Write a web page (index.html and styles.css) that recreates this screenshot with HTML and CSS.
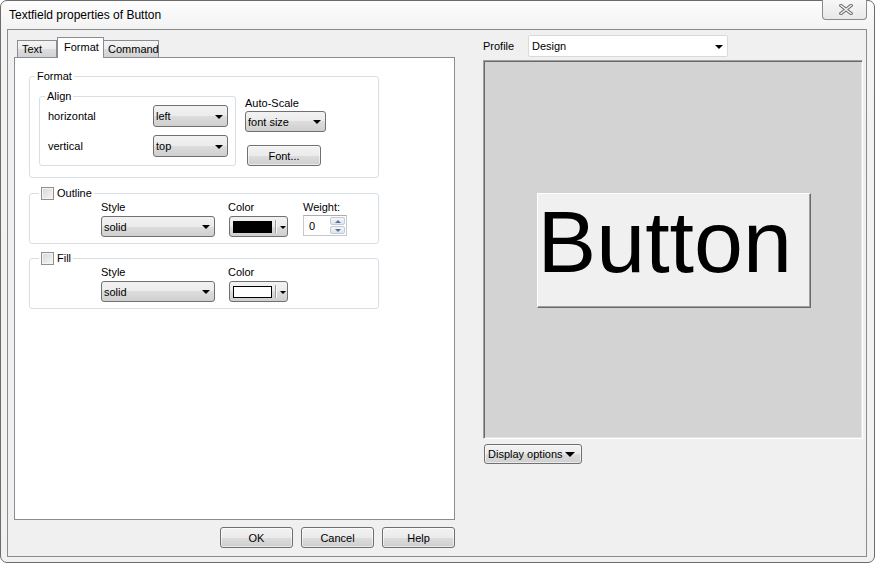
FILE: index.html
```html
<!DOCTYPE html>
<html>
<head>
<meta charset="utf-8">
<title>Textfield properties of Button</title>
<link rel="stylesheet" href="styles.css">
</head>
<body>
<div class="window">
  <div class="titlebar">
    <span class="title">Textfield properties of Button</span>
    <div class="close">
      <svg width="14" height="11" viewBox="0 0 14 11">
        <path d="M2 1.5 L12 9.5 M12 1.5 L2 9.5" stroke="#6a6a6a" stroke-width="3.4" stroke-linecap="square" fill="none"/>
        <path d="M2 1.5 L12 9.5 M12 1.5 L2 9.5" stroke="#f3f3f3" stroke-width="1.5" stroke-linecap="square" fill="none"/>
      </svg>
    </div>
  </div>
  <div class="client">
    <div class="left">
      <div class="tabs">
        <div class="tab tab-text">Text</div>
        <div class="tab tab-format">Format</div>
        <div class="tab tab-cmd">Command</div>
      </div>
      <div class="panel">
        <fieldset class="group wide">
          <legend class="lg">Format</legend>
          <div class="format-row">
            <fieldset class="group align">
              <legend class="lg">Align</legend>
              <div class="align-body">
                <div class="arow"><span>horizontal</span><div class="combo w75"><span>left</span><i class="arr"></i></div></div>
                <div class="arow"><span>vertical</span><div class="combo w75"><span>top</span><i class="arr"></i></div></div>
              </div>
            </fieldset>
            <div class="autoscale">
              <span class="lbl">Auto-Scale</span>
              <div class="combo w81 mt1"><span>font size</span><i class="arr"></i></div>
              <div class="btn font-btn">Font...</div>
            </div>
          </div>
        </fieldset>

        <fieldset class="group wide outline">
          <legend class="lg chk-legend"><span class="chk"></span><span>Outline</span></legend>
          <div class="cols">
            <div class="col col-style"><span class="lbl">Style</span><div class="combo w114 mt2"><span>solid</span><i class="arr"></i></div></div>
            <div class="col col-color"><span class="lbl">Color</span><div class="colorpick mt2"><span class="swatch black"></span><span class="sep"></span><i class="arr small"></i></div></div>
            <div class="col col-weight"><span class="lbl">Weight:</span>
              <div class="spin">
                <span class="val">0</span>
                <span class="spinbtns"><span class="sb up"><i></i></span><span class="sb dn"><i></i></span></span>
              </div>
            </div>
          </div>
        </fieldset>

        <fieldset class="group wide fill">
          <legend class="lg chk-legend"><span class="chk"></span><span>Fill</span></legend>
          <div class="cols">
            <div class="col col-style"><span class="lbl">Style</span><div class="combo w114 mt2"><span>solid</span><i class="arr"></i></div></div>
            <div class="col col-color"><span class="lbl">Color</span><div class="colorpick mt2"><span class="swatch white"></span><span class="sep"></span><i class="arr small"></i></div></div>
          </div>
        </fieldset>
      </div>
      <div class="buttons">
        <div class="btn dlg">OK</div>
        <div class="btn dlg">Cancel</div>
        <div class="btn dlg">Help</div>
      </div>
    </div>
    <div class="right">
      <div class="profile-row">
        <span class="profile-lbl">Profile</span>
        <div class="profile-combo"><span>Design</span><i class="arr"></i></div>
      </div>
      <div class="preview">
        <div class="pv-button">Button</div>
      </div>
      <div class="btn dispopt"><span>Display options</span><i class="arr big"></i></div>
    </div>
  </div>
</div>
</body>
</html>
```
FILE: styles.css
```css
* { box-sizing: border-box; }
html, body { margin: 0; padding: 0; }
body {
  width: 875px;
  height: 564px;
  overflow: hidden;
  background: #ffffff;
  font-family: "Liberation Sans", Arial, sans-serif;
  font-size: 11px;
  color: #000;
}
.window {
  width: 875px;
  height: 563px;
  border: 1px solid #6b6b6b;
  border-radius: 7px;
  background: linear-gradient(#fdfdfd, #f3f3f3 28px, #f1f1f1);
  padding: 0 7px 5px 6px;
  display: flex;
  flex-direction: column;
}
.titlebar {
  height: 28px;
  display: flex;
  justify-content: space-between;
  align-items: flex-start;
  padding-left: 2px;
}
.title {
  font-size: 12px;
  line-height: 28px;
  color: #000;
}
.close {
  margin-top: -1px;
  width: 45px;
  height: 20px;
  border: 1px solid #8a8a8a;
  border-top: none;
  border-radius: 0 0 4px 4px;
  background: linear-gradient(#f7f7f7, #e8e8e8);
  display: flex;
  align-items: center;
  justify-content: center;
  padding-left: 2px;
}
.client {
  flex: 1;
  border: 1px solid #8b8b8b;
  background: #f0f0f0;
  display: flex;
  gap: 28px;
  padding: 0 3px 0 6px;
}
/* left column */
.left {
  width: 441px;
  padding-top: 7px;
  display: flex;
  flex-direction: column;
}
.tabs {
  height: 20px;
  display: flex;
  align-items: flex-end;
  padding-left: 3px;
}
.tab {
  height: 17px;
  border: 1px solid #898c95;
  border-bottom: none;
  background: linear-gradient(#f4f4f4, #ececec 50%, #dedede 50%, #d2d2d2);
  display: flex;
  align-items: center;
  padding-left: 4px;
  line-height: 13px;
  padding-top: 1px;
}
.tab-text { width: 40px; }
.tab-format {
  width: 47px;
  height: 21px;
  margin-bottom: -1px;
  background: #fff;
  position: relative;
  z-index: 1;
  padding-left: 6px;
  padding-top: 0;
  padding-bottom: 2px;
}
.tab-cmd { width: 56px; margin-left: -1px; padding-left: 4px; }
.panel {
  height: 463px;
  border: 1px solid #898c95;
  background: #fff;
  padding: 12px 0 0 14px;
}
.group {
  margin: 0;
  padding: 0;
  border: 1px solid #d5dfe5;
  border-radius: 3px;
  min-width: 0;
}
.wide { width: 350px; }
.lg {
  padding: 0 2px;
  margin-left: 5px;
  line-height: 13px;
  height: 13px;
}
.format-row {
  display: flex;
  align-items: flex-start;
  padding: 7px 0 11px 9px;
}
.align { width: 197px; }
.align-body {
  display: flex;
  flex-direction: column;
  gap: 8px;
  padding: 2px 7px 8px 8px;
}
.arow {
  display: flex;
  align-items: center;
  justify-content: space-between;
}
.autoscale {
  display: flex;
  flex-direction: column;
  align-items: flex-start;
  padding-top: 7px;
  margin-left: 9px;
}
.lbl { line-height: 13px; display: block; }
.mt1 { margin-top: 1px; }
.mt2 { margin-top: 2px; }

.combo {
  height: 22px;
  border: 1px solid #707070;
  border-radius: 3px;
  background: linear-gradient(#f2f2f2, #ebebeb 50%, #dddddd 50%, #cfcfcf);
  display: flex;
  align-items: center;
  justify-content: space-between;
  padding: 0 4px 0 2px;
}
.w75 { width: 75px; }
.w81 { width: 81px; height: 21px; }
.w114 { width: 114px; height: 21px; }
.arr {
  display: block;
  width: 0;
  height: 0;
  border-left: 4px solid transparent;
  border-right: 4px solid transparent;
  border-top: 4px solid #000;
  margin-top: 1px;
}
.arr.small {
  border-left-width: 3px;
  border-right-width: 3px;
  border-top-width: 3px;
}
.arr.big {
  border-left-width: 5px;
  border-right-width: 5px;
  border-top-width: 5px;
}
.btn {
  height: 21px;
  border: 1px solid #707070;
  border-radius: 3px;
  background: linear-gradient(#f2f2f2, #ebebeb 50%, #dddddd 50%, #cfcfcf);
  display: flex;
  align-items: center;
  justify-content: center;
  box-shadow: inset 0 0 0 1px rgba(255,255,255,0.55);
}
.font-btn {
  width: 74px;
  margin-top: 13px;
  margin-left: 2px;
}
.chk-legend {
  display: flex;
  align-items: center;
  margin-left: 9px;
}
.chk {
  display: block;
  width: 13px;
  height: 13px;
  border: 1px solid #8e8f8f;
  background: linear-gradient(135deg, #d6d6d6, #f6f6f6);
  box-shadow: inset 0 0 0 1px #f4f4f4;
  margin-right: 3px;
}
.outline { margin-top: 9px; }
.fill { margin-top: 8px; }
.cols {
  display: flex;
  align-items: flex-start;
  padding: 1px 0 6px 71px;
}
.col { display: flex; flex-direction: column; align-items: flex-start; }
.col-color { margin-left: 13px; width: 60px; }
.col-color .colorpick { margin-left: 1px; }
.col-weight { margin-left: 15px; }
.colorpick {
  width: 59px;
  height: 21px;
  border: 1px solid #707070;
  border-radius: 3px;
  background: linear-gradient(#f2f2f2, #ebebeb 50%, #dddddd 50%, #cfcfcf);
  display: flex;
  align-items: center;
  padding-left: 3px;
}
.swatch {
  display: block;
  width: 39px;
  height: 12px;
  border: 1px solid #000;
}
.swatch.black { background: #000; }
.swatch.white { background: #fff; }
.sep {
  display: block;
  width: 2px;
  height: 13px;
  margin: 0 3px 0 3px;
  border-left: 1px solid #9a9a9a;
  border-right: 1px solid #fafafa;
}
.spin {
  width: 44px;
  height: 21px;
  margin-top: 1px;
  border: 1px solid #c5c8cf;
  border-top-color: #abadb3;
  background: #fff;
  display: flex;
  align-items: stretch;
  padding: 1px;
}
.val {
  flex: 1;
  display: flex;
  align-items: center;
  padding-left: 4px;
}
.spinbtns {
  width: 15px;
  display: flex;
  flex-direction: column;
  gap: 1px;
}
.sb {
  flex: 1;
  border: 1px solid #c3cad6;
  border-radius: 2px;
  background: linear-gradient(#f4f6f9, #dfe4ec);
  display: flex;
  align-items: center;
  justify-content: center;
}
.sb i {
  display: block;
  width: 0;
  height: 0;
  border-left: 3px solid transparent;
  border-right: 3px solid transparent;
}
.up i { border-bottom: 3px solid #5a6f96; }
.dn i { border-top: 3px solid #5a6f96; }
.buttons {
  display: flex;
  justify-content: flex-end;
  gap: 8px;
  margin-top: 7px;
}
.dlg { width: 73px; }
/* right column */
.right {
  width: 380px;
  padding-top: 5px;
  display: flex;
  flex-direction: column;
  align-items: flex-start;
}
.profile-row {
  height: 22px;
  display: flex;
  align-items: center;
}
.profile-lbl { width: 45px; }
.profile-combo {
  width: 200px;
  height: 22px;
  border: 1px solid #dadada;
  border-radius: 2px;
  background: #fff;
  display: flex;
  align-items: center;
  justify-content: space-between;
  padding: 0 4px 0 3px;
}
.preview {
  margin-top: 3px;
  width: 380px;
  height: 379px;
  background: #d3d3d3;
  border: 1px solid;
  border-color: #a0a0a0 #ffffff #ffffff #a0a0a0;
  box-shadow: inset 1px 1px 0 #696969, inset -1px -1px 0 #e3e3e3;
  display: flex;
  align-items: center;
  justify-content: center;
}
.pv-button {
  width: 274px;
  height: 115px;
  background: #f0f0f0;
  border: 1px solid;
  border-color: #ffffff #696969 #696969 #ffffff;
  box-shadow: inset -1px -1px 0 #a0a0a0;
  font-family: "Liberation Sans", Arial, sans-serif;
  font-size: 88px;
  line-height: 1.1;
  color: #000;
  overflow: hidden;
  margin-left: 1px;
  margin-top: 1px;
}
.dispopt {
  margin-top: 5px;
  margin-left: 1px;
  width: 98px;
  height: 20px;
  justify-content: space-between;
  padding: 0 6px 0 3px;
}
```
